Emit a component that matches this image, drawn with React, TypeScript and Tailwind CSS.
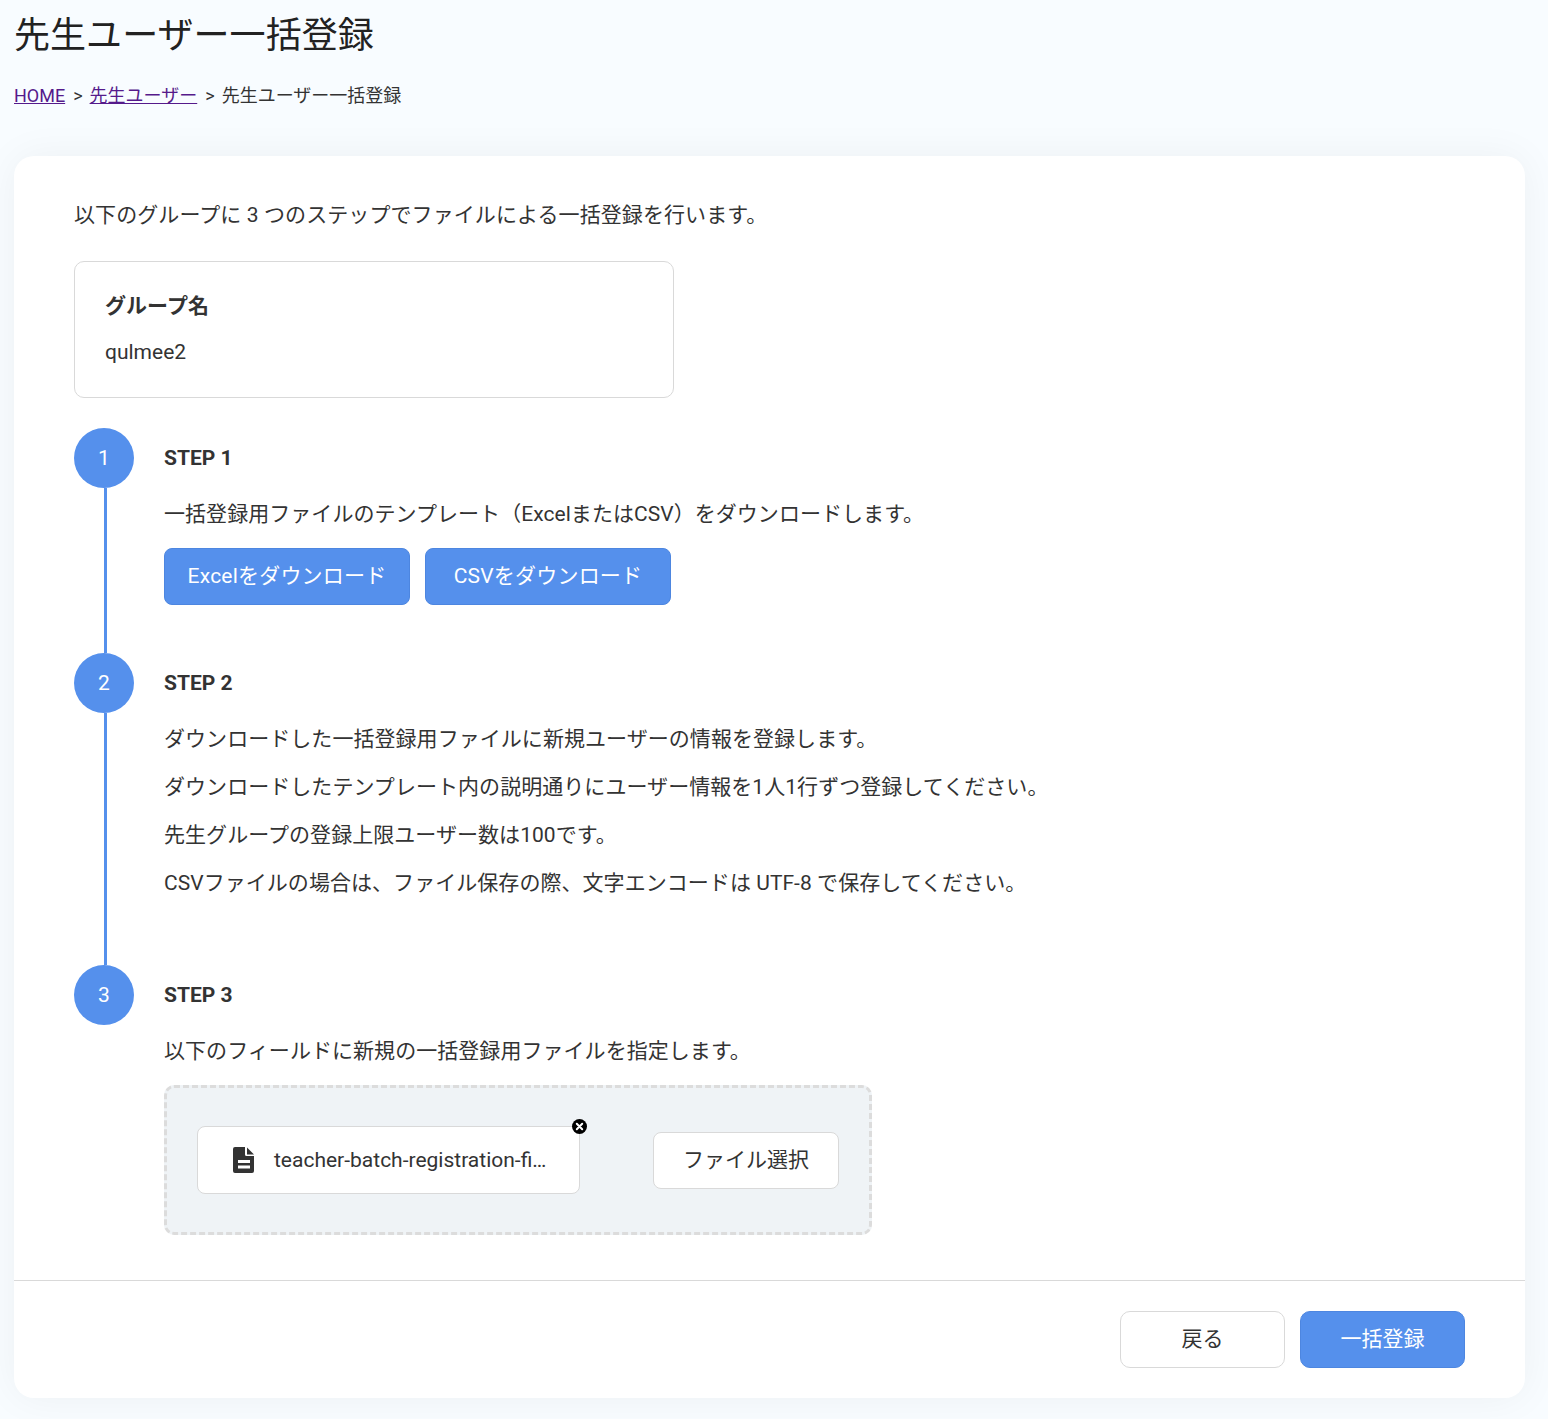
const font = "font-['Roboto','Noto_Sans_CJK_JP',sans-serif]";

function StepHead({ no }: { no: number }) {
  return <h2 className="h-[60px] pt-[2px] flex items-center text-[21px] font-bold text-[#333] tracking-normal">STEP {no}</h2>;
}

function Para({ children }: { children: React.ReactNode }) {
  return <p className="h-6 leading-6 mb-6 text-[21px] whitespace-nowrap">{children}</p>;
}

function Step({ no, last, h, children }: { no: number; last?: boolean; h: string; children: React.ReactNode }) {
  return (
    <div className={`flex ${h}`}>
      <div className="w-[90px] shrink-0 flex flex-col">
        <div className="w-[60px] h-[60px] pt-[2px] rounded-full bg-[#5590ec] text-white text-[21px] flex items-center justify-center">
          {no}
        </div>
        {!last && <div className="flex-1 w-[3px] ml-[30px] bg-[#5590ec]" />}
      </div>
      <div className="flex-1">{children}</div>
    </div>
  );
}

function FileIcon() {
  return (
    <svg viewBox="0 0 21 26" className="w-[21px] h-[26px] shrink-0">
      <path
        fill="#333"
        d="M12 0H2a2 2 0 0 0-2 2v22a2 2 0 0 0 2 2h17a2 2 0 0 0 2-2V9h-7.5A1.5 1.5 0 0 1 12 7.500z"
      />
      <path fill="#333" d="M14 0.500l7 7h-7z" />
      <rect x="5" y="13" width="12" height="3" fill="#fff" />
      <rect x="5" y="18.500" width="12" height="3" fill="#fff" />
    </svg>
  );
}

function RemoveBadge() {
  return (
    <svg viewBox="0 0 15 15" className="absolute -top-[8px] -right-[8px] w-[15px] h-[15px]">
      <circle cx="7.500" cy="7.500" r="7.500" fill="#000" />
      <path d="M4.800 4.800l5.400 5.400M10.200 4.800l-5.400 5.400" stroke="#fff" strokeWidth="2" strokeLinecap="round" />
    </svg>
  );
}

export default function App() {
  return (
    <div className={`${font} min-h-[1419px] bg-[#f8fcff] pl-[14px] pr-[23px] text-[#333] font-normal tracking-[0.05px]`}>
      <h1 className="h-[68px] pt-[3px] flex items-center text-[36px] font-normal text-[#222]">先生ユーザー一括登録</h1>
      <nav className="h-[18px] mt-[19px] leading-[18px] text-[18px] flex font-normal tracking-normal">
        <a className="underline text-[#551a8b]">HOME</a>
        <span className="ml-2 mr-[7px]">&gt;</span>
        <a className="underline text-[#551a8b]">先生ユーザー</a>
        <span className="ml-2 mr-[7px]">&gt;</span>
        <span>先生ユーザー一括登録</span>
      </nav>
      <main className="mt-[51px] h-[1242px] bg-white rounded-[20px] shadow-[0_0_40px_rgba(0,0,0,0.05)] flex flex-col">
        <div className="flex-1 px-[60px] pt-[47px]">
          <p className="h-6 leading-6 text-[21px] tracking-[0.09px]">以下のグループに 3 つのステップでファイルによる一括登録を行います。</p>
          <section className="mt-[34px] w-[600px] h-[137px] border border-[#d9d9d9] rounded-[10px] px-[30px] pt-[30px]">
            <h3 className="h-[28px] leading-[28px] text-[21px] font-bold">グループ名</h3>
            <p className="mt-[20px] h-6 leading-6 text-[21px] tracking-normal">qulmee2</p>
          </section>
          <div className="mt-[30px]">
            <Step no={1} h="h-[225px]">
              <StepHead no={1} />
              <p className="mt-[14px] h-6 leading-6 text-[21px] whitespace-nowrap">一括登録用ファイルのテンプレート（ExcelまたはCSV）をダウンロードします。</p>
              <div className="mt-[22px] flex gap-[15px]">
                <button className="w-[246px] h-[57px] rounded-[8px] bg-[#5590ec] border border-[#4d86e0] text-white text-[21px] tracking-[0.2px]">Excelをダウンロード</button>
                <button className="w-[246px] h-[57px] rounded-[8px] bg-[#5590ec] border border-[#4d86e0] text-white text-[21px] tracking-[0.2px]">CSVをダウンロード</button>
              </div>
            </Step>
            <Step no={2} h="h-[312px]">
              <StepHead no={2} />
              <div className="mt-[14px]">
                <Para>ダウンロードした一括登録用ファイルに新規ユーザーの情報を登録します。</Para>
                <Para>ダウンロードしたテンプレート内の説明通りにユーザー情報を1人1行ずつ登録してください。</Para>
                <Para>先生グループの登録上限ユーザー数は100です。</Para>
                <Para>CSVファイルの場合は、ファイル保存の際、文字エンコードは UTF-8 で保存してください。</Para>
              </div>
            </Step>
            <Step no={3} last h="h-[270px]">
              <StepHead no={3} />
              <p className="mt-[14px] h-6 leading-6 text-[21px] whitespace-nowrap">以下のフィールドに新規の一括登録用ファイルを指定します。</p>
              <div className="mt-[22px] w-[708px] h-[150px] bg-[#eff3f6] border-[3px] border-dashed border-[#dcdcdc] rounded-[10px] px-[30px] flex items-center justify-between">
                <div className="relative w-[383px] h-[68px] bg-white border border-[#d9d9d9] rounded-[8px] flex items-center pl-[35px]">
                  <FileIcon />
                  <span className="ml-[20px] pt-[2px] whitespace-nowrap text-[21px] tracking-normal">teacher-batch-registration-fi…</span>
                  <RemoveBadge />
                </div>
                <button className="w-[186px] h-[57px] bg-white border border-[#d9d9d9] rounded-[8px] text-[21px] pt-[1px] tracking-normal">ファイル選択</button>
              </div>
            </Step>
          </div>
        </div>
        <footer className="h-[118px] border-t border-[#d9d9d9] px-[60px] flex items-center justify-end gap-[15px]">
          <button className="w-[165px] h-[57px] bg-white border border-[#d9d9d9] rounded-[10px] text-[21px]">戻る</button>
          <button className="w-[165px] h-[57px] bg-[#5590ec] border border-[#4d86e0] rounded-[10px] text-white text-[21px]">一括登録</button>
        </footer>
      </main>
    </div>
  );
}
